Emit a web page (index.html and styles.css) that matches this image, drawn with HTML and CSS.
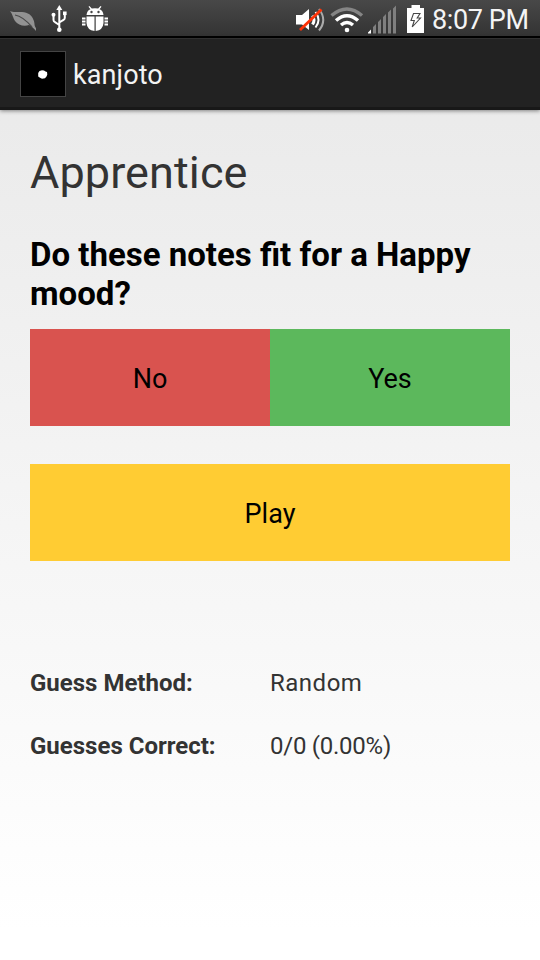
FILE: index.html
```html
<!DOCTYPE html>
<html lang="en">
<head>
<meta charset="utf-8">
<title>kanjoto</title>
<link rel="stylesheet" href="styles.css">
</head>
<body>
<header class="status-bar">
  <svg class="status-icons" width="110" height="36" viewBox="0 0 110 36">
    <path d="M10 11C14 13 17 11.500 22 12C28 12.500 32 15 33.500 20C35 23 34 26 36 28L36 31C34 29 32 26 29 25C24 27 18 25 15 21C13 18 13 15 10 11Z" fill="#929292"/>
    <path d="M15 15C21 16 26 20 32 27" fill="none" stroke="#484848" stroke-width="1.2"/>
    <g fill="none" stroke="#fff" stroke-width="2">
      <path d="M59.300 9V29M53.500 15V20Q53.500 21.500 55 22.200L59.300 25M64.800 13V18Q64.800 19.500 63 20.200L59.300 22.500"/>
    </g>
    <path d="M59.300 5L62.300 10H56.300Z" fill="#fff"/>
    <circle cx="59.300" cy="29.800" r="2.300" fill="#fff"/>
    <circle cx="53.500" cy="14.800" r="2" fill="#fff"/>
    <rect x="63" y="11.500" width="3.600" height="3.600" fill="#fff"/>
    <path d="M86.500 15Q87 10.500 90.500 9.200L88.500 6.700L89.400 6L91.800 8.600Q95 7.800 98.200 8.600L100.500 6L101.500 6.700L99.500 9.200Q103 10.500 103.500 15ZM86.500 16.500H94.500V31Q87 30 86.500 23ZM95.700 16.500H103.500V23Q103 30 95.700 31Z" fill="#fff"/>
    <path d="M82 18.500H85.500M82 21.500H85.500M82 24.500H85.500M104.500 18.500H108M104.500 21.500H108M104.500 24.500H108" stroke="#fff" stroke-width="1.800"/>
    <circle cx="91.500" cy="12" r="1.200" fill="#484848"/><circle cx="98.500" cy="12" r="1.200" fill="#484848"/>
  </svg>
  <svg class="status-icons" width="136" height="36" viewBox="290 0 136 36">
    <path d="M296 15H302L309 9V30L302 24.500H296Z" fill="#fff"/>
    <g fill="none" stroke="#fff" stroke-width="2">
      <path d="M312.500 15.500Q315.500 20 312.500 24.500" stroke-width="3"/>
      <path d="M315.500 12Q321.500 20 315.500 27.500"/>
      <path d="M319 9Q327.500 20 319 30.500" stroke="#aaa"/>
    </g>
    <path d="M300 30L321.500 9.500" stroke="#ff3207" stroke-width="2.800"/>
    <g fill="none" stroke-width="3.500">
      <path d="M331.500 15.500Q347 2.500 362 15.500" stroke="#858585"/>
      <path d="M336 20.500Q347 11 358 20.500M341 25Q347 20 353 25" stroke="#fff"/>
    </g>
    <circle cx="347" cy="30" r="2.300" fill="#fff"/>
    <path d="M368 33.500V32.500L371 29.500V33.500Z" fill="#fff"/>
    <path d="M373 33.500V27L376 24V33.500ZM378 33.500V22L381 19V33.500ZM383 33.500V17L386 14V33.500ZM388 33.500V12.500L391 9.500V33.500ZM393 33.500V8.500L396 5.500V33.500Z" fill="#808080"/>
    <path d="M411.500 5H420V8H424V33H407V8H411.500Z" fill="#fff"/>
    <path d="M413.500 13.500H420L417.200 18H420.500L412.200 27L414.300 20.500H411Z" fill="#fff" stroke="#484848" stroke-width="1.100"/>
  </svg>
  <span class="clock">8:07 PM</span>
</header>
<nav class="action-bar">
  <svg class="app-icon" width="46" height="46" viewBox="0 0 46 46">
    <rect x=".5" y=".5" width="45" height="45" fill="#000" stroke="#444"/>
    <path d="M19.500 20L22 19.300L24 19.500L25.500 20.500L27 21L27.300 23.500L26.500 25.500L25 27.300L22 27.800L20 26.800L18.200 25.500V22Z" fill="#fff"/>
  </svg>
  <span class="app-name">kanjoto</span>
</nav>
<main class="content">
  <h1 class="level">Apprentice</h1>
  <h2 class="question">Do these notes fit for a Happy mood?</h2>
  <div class="answers">
    <button class="button no">No</button>
    <button class="button yes">Yes</button>
  </div>
  <button class="button play">Play</button>
  <dl class="stats">
    <dt>Guess Method:</dt><dd class="method">Random</dd>
    <dt>Guesses Correct:</dt><dd class="score">0/0 (0.00%)</dd>
  </dl>
</main>
</body>
</html>
```
FILE: styles.css
```css
* { box-sizing: border-box; }

body {
  margin: 0;
  width: 540px;
  height: 960px;
  overflow: hidden;
  display: flex;
  flex-direction: column;
  font-family: Roboto, "Liberation Sans", sans-serif;
  color: #333;
  background: linear-gradient(#e8e8e8, #fff 930px);
}

.status-bar {
  height: 38px;
  flex: none;
  display: flex;
  background: linear-gradient(#484848, #333 36px, #000 36px);
}

.status-icons { flex: none; display: block; }
.status-icons + .status-icons { margin-left: 180px; }

.clock {
  margin-left: 6px;
  font-size: 27px;
  line-height: 41px;
  letter-spacing: -.4px;
  color: #f4f4f4;
  white-space: nowrap;
}

.action-bar {
  height: 72px;
  flex: none;
  display: flex;
  align-items: center;
  gap: 7px;
  padding-left: 20px;
  background: linear-gradient(#303030 1px, #222 1px, #222 69px, #181818 69px);
  box-shadow: 0 1px 4px rgba(0, 0, 0, .45);
}

.app-name {
  padding-top: 2px;
  font-size: 27px;
  line-height: 32px;
  letter-spacing: .1px;
  color: #f3f3f3;
}

.content { padding: 36px 30px 0; }

.level {
  margin: 0 0 36px;
  font-size: 45px;
  font-weight: 400;
  line-height: 53px;
  letter-spacing: .1px;
}

.question {
  margin: 0 0 16px;
  font-size: 33px;
  font-weight: 700;
  line-height: 39px;
  color: #000;
}

.answers { display: flex; margin-bottom: 38px; }

.button {
  flex: 1;
  height: 97px;
  padding: 2px 0 0;
  border: 0;
  font: 27px/32px Roboto, "Liberation Sans", sans-serif;
  color: #000;
}

.no { background: #d9534f; }
.yes { background: #5cb85c; }
.play { display: block; width: 100%; background: #ffcc33; }

.stats {
  display: grid;
  grid-template-columns: 240px 1fr;
  row-gap: 35px;
  margin: 108px 0 0;
  font-size: 24px;
  line-height: 28px;
}

.stats dt { font-weight: 700; }
.stats dd { margin: 0; }
.method { letter-spacing: .5px; }
.score { letter-spacing: -.25px; }
```
